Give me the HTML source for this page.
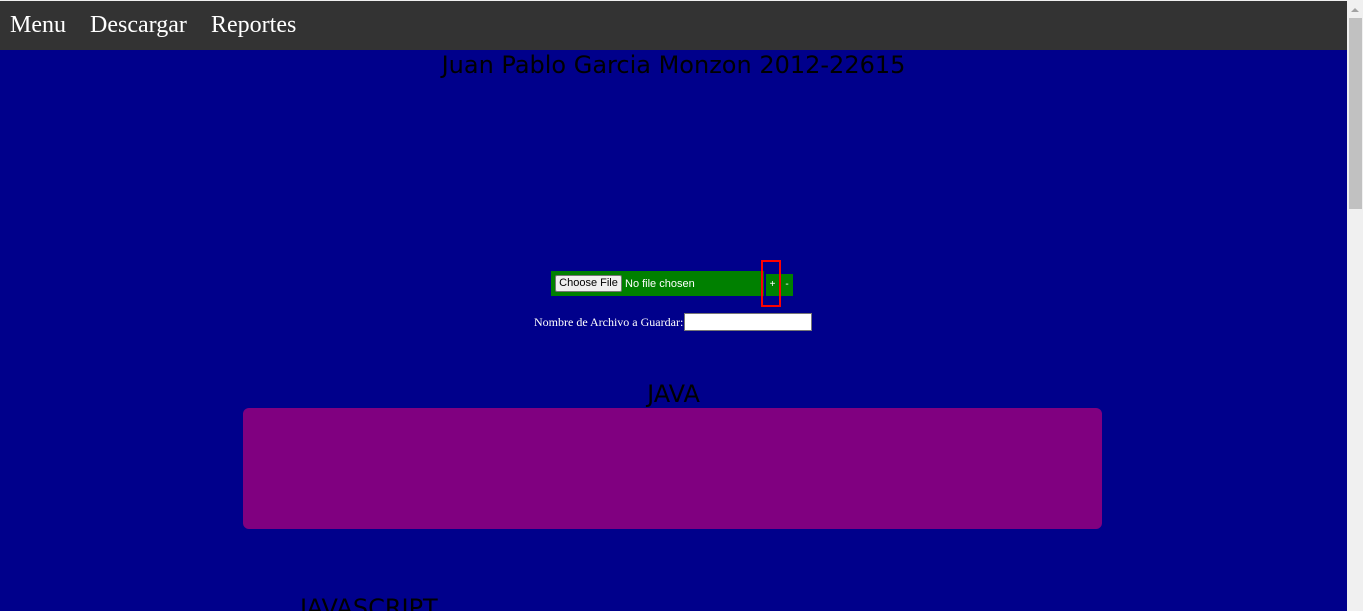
<!DOCTYPE html>
<html><head><style>
body{margin:0;width:1363px;height:611px;overflow:hidden;background:#f0f0f0;position:relative;font-family:"DejaVu Sans",sans-serif}
#page{position:absolute;left:0;top:1px;width:1347px;height:610px;background:#00008b;overflow:hidden}
#nav{position:absolute;left:0;top:0;width:1347px;height:49px;background:#333;}
#nav span{position:absolute;top:11px;color:#fff;font:24px "Liberation Serif",serif}
.t{position:absolute;color:#000;font-size:24px;white-space:nowrap}
#sb{position:absolute;left:1347px;top:0;width:16px;height:611px;background:#f0f0f0}
#thumb{position:absolute;left:1349px;top:18px;width:13px;height:191px;background:#c1c1c1}
</style></head><body>
<div id="page">
<div id="nav"><span style="left:10px">Menu</span><span style="left:90px">Descargar</span><span style="left:211px">Reportes</span></div>
<div class="t" style="left:0;width:1347px;text-align:center;top:50px">Juan Pablo Garcia Monzon 2012-22615</div>
<div style="position:absolute;left:551px;top:270px;width:213px;height:25px;background:#008000"></div>
<div style="position:absolute;left:555px;top:274px;width:67px;height:17px;background:#efefef;border:1px solid #767676;border-radius:2px;box-sizing:border-box;font:11px 'Liberation Sans',sans-serif;line-height:15px;text-align:center">Choose File</div>
<div style="position:absolute;left:625px;top:277px;color:#fff;font:11px 'Liberation Sans',sans-serif">No file chosen</div>
<div style="position:absolute;left:766px;top:273px;width:13px;height:22px;background:#008000;color:#fff;font:10px 'Liberation Sans',sans-serif;text-align:center;line-height:22px">+</div>
<div style="position:absolute;left:781px;top:273px;width:12px;height:22px;background:#008000;color:#fff;font:10px 'Liberation Sans',sans-serif;text-align:center;line-height:22px">-</div>
<div style="position:absolute;left:761px;top:259px;width:20px;height:47px;border:2px solid #f00;box-sizing:border-box"></div>
<div style="position:absolute;left:534px;top:314px;color:#fff;font:12px 'Liberation Serif',serif">Nombre de Archivo a Guardar:</div>
<div style="position:absolute;left:684px;top:312px;width:128px;height:18px;background:#fff;border:1px solid #767676;box-sizing:border-box"></div>
<div class="t" style="left:0;width:1347px;text-align:center;top:379px">JAVA</div>
<div style="position:absolute;left:243px;top:407px;width:859px;height:121px;background:#800080;border-radius:6px"></div>
<div class="t" style="left:300px;top:593px">JAVASCRIPT</div>
</div>
<div id="sb"></div><div id="thumb"></div>
<div style="position:absolute;left:1351px;top:8px;width:0;height:0;border-left:4px solid transparent;border-right:4px solid transparent;border-bottom:4px solid #a3a3a3"></div>
</body></html>
